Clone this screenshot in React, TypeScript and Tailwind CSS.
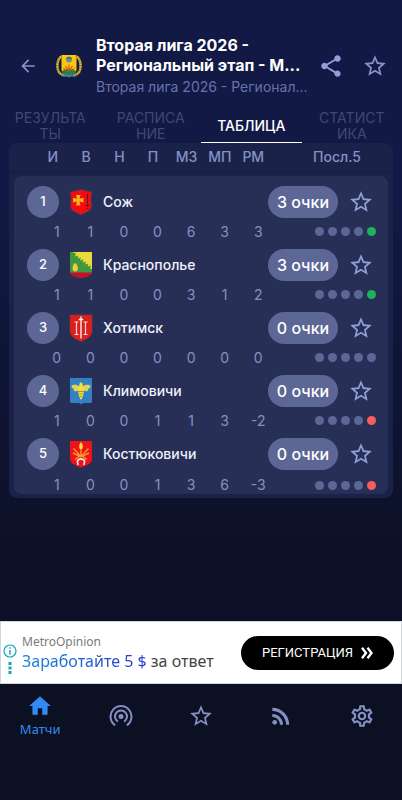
import React, { useState } from "react";
import {
    MdArrowBack,
    MdHome,
    MdOutlineSettings,
    MdRssFeed,
    MdShare,
    MdStarBorder,
} from "react-icons/md";

type Result = "none" | "win" | "loss";

interface Team {
    rank: number;
    name: string;
    points: string;
    stats: number[];
    last: Result;
    crest: React.ReactNode;
}

const SozhCrest = () => (
    <svg viewBox="0 0 24 28" className="w-6 h-7" aria-hidden="true">
        <path d="M1.500 4C6 4 8.500 2 12 2s6 2 10.500 2c-1.200 4.500-.8 9-.2 13.500.2 5-4.800 6.500-10.300 9-5.500-2.500-10.500-4-10.300-9 .6-4.500 1-9-.2-13.500z" fill="#f40b0d" stroke="#8c3445" strokeWidth=".7" />
        <path d="M7 7h4.500l-1 3.700 4-.9v4.700l-4-1 1 4H7l1-4-4 1V9.800l4 .9z" fill="#f9b21c" />
        <path d="M18.500 6v13M16.500 17.500h4M17.500 20.500h2" stroke="#5b1826" strokeWidth="1.100" />
    </svg>
);

const KrasnopolyeCrest = () => (
    <svg viewBox="0 0 24 28" className="w-6 h-7" aria-hidden="true">
        <path d="M1 1h22v19c0 4-5 6-11 7-6-1-11-3-11-7z" fill="#3f9840" />
        <path d="M3 1h20v17l-2-.5 1-3-3.500 1 1-3-3.500 1 1-3-3.500 1 1-3-3.500 1 1-3-3.500 1 1-3-3.500 1 1-3z" fill="#eada3c" />
        <path d="M1 21.500h22c-.8 3.500-5.500 4.500-11 5.500-5.500-1-10.200-2-11-5.500z" fill="#c80e2c" />
        <path d="M3.500 17c0-2 1-2.500 1-4.500h3c0 2 1.500 2.500 1.500 4.500s-1 3.500-2.700 3.500S3.500 19 3.500 17z" fill="#f6c544" />
    </svg>
);

const KhotimskCrest = () => (
    <svg viewBox="0 0 24 28" className="w-6 h-7" aria-hidden="true">
        <path d="M1 1h22v16c0 5.500-5.500 8-11 10.500C6.500 25 1 22.500 1 17z" fill="#d9201f" stroke="#a52835" strokeWidth=".5" />
        <path d="M12 2.500v22M9.800 5.500h4.400" stroke="#fff" strokeWidth="1.300" />
        <path d="M7.500 8v12.500M16.500 8v12.500M5.500 8h4M5.500 20.500h4M14.500 8h4M14.500 20.500h4" stroke="#f7d9d2" strokeWidth="1.200" />
    </svg>
);

const KlimovichiCrest = () => (
    <svg viewBox="0 0 24 28" className="w-6 h-7" aria-hidden="true">
        <path d="M1 1h22v23.500c0 1-.8 1.500-2 1.500h-7L12 27.500 10 26H3c-1.200 0-2-.5-2-1.500z" fill="#3181c4" />
        <path d="M11 9.500C8 7.500 4 7 2.500 9c0 2 1 2.500 2.500 2.500C4 13 5 14.500 6.500 14.300c2 .2 3.500-1 4.500-3zM13 9.500c3-2 7-2.500 8.500-.5 0 2-1 2.500-2.500 2.500 1 1.500 0 3-1.500 2.800-2 .2-3.500-1-4.500-3z" fill="#e3d44f" />
        <path d="M12 5.500c1.500 0 2 1.500 1.500 3 1.500 2 1.500 3.500 1 5 .7 3-.5 6.500-2.500 9.500-2-3-3.200-6.500-2.500-9.500-.5-1.500-.5-3 1-5-.5-1.500 0-3 1.500-3z" fill="#f3df3d" />
        <path d="M10 14.500h4M10 17h4M10.800 19.500h2.400" stroke="#8b8b37" strokeWidth=".8" />
    </svg>
);

const KostyukovichiCrest = () => (
    <svg viewBox="0 0 24 28" className="w-6 h-7" aria-hidden="true">
        <path d="M1 1h22v18c0 4.500-5.500 6.500-11 8.500C6.500 25.500 1 23.500 1 19z" fill="#f01216" />
        <path d="M12 2c2 2.500 2.400 4.500 1.200 7h-2.400C9.600 6.500 10 4.500 12 2z" fill="#fbd63c" />
        <path d="M4.500 8.500l7.500 8 7.500-8M4 13l8 4 8-4M6 19.500l6-4.500 6 4.500M12 9v8" fill="none" stroke="#f39a2d" strokeWidth="1.400" />
        <path d="M9.300 25c-2-4-.5-6 2.700-6s4.700 2 2.700 6" fill="none" stroke="#f6dce4" strokeWidth="1.800" />
    </svg>
);

const LeagueCrest = () => (
    <svg viewBox="0 0 26 24" className="w-[26px] h-6 shrink-0" aria-hidden="true">
        <path d="M5 2.500C1.500 6 .8 11 2 16c1 3.500 3.500 5 7 5.500M21 2.500c3.500 3.500 4.200 8.500 3 13.500-1 3.500-3.500 5-7 5.500" fill="none" stroke="#8e7a2e" strokeWidth="2.600" />
        <path d="M5 2.500C1.500 6 .8 11 2 16c1 3.500 3.500 5 7 5.500M21 2.500c3.500 3.500 4.200 8.500 3 13.500-1 3.500-3.500 5-7 5.500" fill="none" stroke="#e2b92f" strokeWidth="2" strokeDasharray="1.600 1" />
        <path d="M5.500 1h15v15c0 3-4 4-7.500 6-3.500-2-7.500-3-7.500-6z" fill="#fbc70e" />
        <circle cx="13" cy="5.500" r="3" fill="#5d9396" />
        <path d="M10.500 4.500c2-1 3-1 5 0" fill="none" stroke="#2f4a55" />
        <path d="M6 17c3-2.500 11-2.500 14 0v1.500c-2 1.500-4 2-7 3-3-1-5-1.500-7-3z" fill="#26804a" />
        <path d="M13 10.500V17M9.500 12l3.500 5 3.500-5M7.500 14.500l5.500 2.500 5.500-2.500" fill="none" stroke="#c2571b" strokeWidth="1.100" />
        <path d="M5.500 21.500c3 1 5-.5 7.500 1 2.500-1.500 4.500 0 7.500-1" fill="none" stroke="#4385b4" strokeWidth="1.500" />
    </svg>
);

const BroadcastIcon = () => (
    <svg viewBox="0 0 24 24" className="size-6" fill="none" stroke="currentColor" strokeWidth="2" aria-hidden="true">
        <path d="M6.100 21.300a10.500 10.500 0 1 1 11.800 0" />
        <path d="M8.900 17.600a6 6 0 1 1 6.200 0" />
        <circle cx="12" cy="12.500" r="2.500" fill="currentColor" stroke="none" />
    </svg>
);

const teams: Team[] = [
    { rank: 1, name: "Сож", points: "3 очки", stats: [1, 1, 0, 0, 6, 3, 3], last: "win", crest: <SozhCrest /> },
    { rank: 2, name: "Краснополье", points: "3 очки", stats: [1, 1, 0, 0, 3, 1, 2], last: "win", crest: <KrasnopolyeCrest /> },
    { rank: 3, name: "Хотимск", points: "0 очки", stats: [0, 0, 0, 0, 0, 0, 0], last: "none", crest: <KhotimskCrest /> },
    { rank: 4, name: "Климовичи", points: "0 очки", stats: [1, 0, 0, 1, 1, 3, -2], last: "loss", crest: <KlimovichiCrest /> },
    { rank: 5, name: "Костюковичи", points: "0 очки", stats: [1, 0, 0, 1, 3, 6, -3], last: "loss", crest: <KostyukovichiCrest /> },
];

const columns = ["И", "В", "Н", "П", "МЗ", "МП", "РМ"];

// Long labels are broken over two lines
const tabs = [["РЕЗУЛЬТА", "ТЫ"], ["РАСПИСА", "НИЕ"], ["ТАБЛИЦА"], ["СТАТИСТ", "ИКА"]];

const dotColors: Record<Result, string> = {
    none: "bg-[#5d6796]",
    win: "bg-[#1fb25c]",
    loss: "bg-[#f45d62]",
};

const navItems = [
    { label: "Эфир", icon: <BroadcastIcon /> },
    { label: "Избранное", icon: <MdStarBorder className="size-[26px]" /> },
    { label: "Новости", icon: <MdRssFeed className="size-[26px]" /> },
    { label: "Настройки", icon: <MdOutlineSettings className="size-[26px]" /> },
];

const TeamRows = ({ team }: { team: Team }) => (
    <>
        <tr className="flex items-center h-[34px] pl-[13px] pr-3.5">
            <td className="flex items-center justify-center size-8 rounded-full bg-[#5d6795] text-[13px] font-medium text-white">
                {team.rank}
            </td>
            <td className="flex ml-2.5">{team.crest}</td>
            <th scope="row" className="flex-1 ml-2.5 text-left text-sm font-medium text-[#f0f2fb]">
                {team.name}
            </th>
            <td className="flex items-center justify-center w-[70px] h-8 rounded-full bg-[#5d6795] text-base font-medium text-white whitespace-nowrap">
                {team.points}
            </td>
            <td className="flex ml-2.5">
                <button type="button" aria-label={`В избранное: ${team.name}`} className="text-[#929fd4]">
                    <MdStarBorder className="size-[26px]" />
                </button>
            </td>
        </tr>
        <tr className="grid grid-cols-[repeat(7,1fr)_101px] items-center h-[21px] mt-0.5 mb-1.5 pl-[26px] pr-3 last:mt-1 last:mb-0 last:h-[19px]">
            {team.stats.map((value, index) => (
                <td key={index} className="text-center text-sm text-[#8591c2]">{value}</td>
            ))}
            <td className="flex justify-end gap-1">
                {(["none", "none", "none", "none", team.last] as Result[]).map((result, index) => (
                    <span key={index} className={`size-[9px] rounded-full ${dotColors[result]}`} />
                ))}
            </td>
        </tr>
    </>
);

const App = () => {
    const [activeTab, setActiveTab] = useState(2);

    return (
        <div className="flex flex-col min-h-screen bg-[#0c1023] font-['Inter',sans-serif]">
            <div className="flex-1 flex flex-col bg-linear-to-b from-[#121945] from-0% via-[#121945] via-30% to-[#0c1027] to-90%">
                {/* Header */}
                <header className="flex items-center pl-[18px] pr-3.5 pt-7 h-[104px]">
                    <button type="button" aria-label="Назад" className="text-[#8793c6]">
                        <MdArrowBack className="size-5" />
                    </button>
                    <div className="ml-[18px]"><LeagueCrest /></div>
                    <div className="flex-1 min-w-0 ml-3.5">
                        <h1 className="text-base leading-5 font-bold text-white">
                            Вторая лига 2026 -
                            <span className="block whitespace-nowrap">Региональный этап - М...</span>
                        </h1>
                        <p className="mt-0.5 text-sm leading-5 text-[#6773a8] whitespace-nowrap">Вторая лига 2026 - Регионал...</p>
                    </div>
                    <button type="button" aria-label="Поделиться" className="text-[#929fd8]">
                        <MdShare className="size-[26px]" />
                    </button>
                    <button type="button" aria-label="В избранное" className="ml-[18px] text-[#8793c6]">
                        <MdStarBorder className="size-[26px]" />
                    </button>
                </header>

                {/* Tabs */}
                <div role="tablist" className="grid grid-cols-4 h-[39px]">
                    {tabs.map((lines, index) => (
                        <button
                            key={lines[0]}
                            type="button"
                            role="tab"
                            aria-selected={activeTab === index}
                            onClick={() => setActiveTab(index)}
                            className={`flex flex-col items-center justify-center pt-1.5 text-sm leading-4 border-b-2 ${activeTab === index ? "border-white text-white font-medium" : "border-transparent text-[#414870]"}`}
                        >
                            {lines.map((line) => <span key={line}>{line}</span>)}
                        </button>
                    ))}
                </div>

                {/* Standings */}
                <main className="px-[9px]">
                    <table className="block rounded-lg bg-[#1b2249] pb-1">
                        <thead className="block border-b border-[#161c43]">
                            <tr className="grid grid-cols-[repeat(7,1fr)_101px] items-center h-7 pl-[27px] pr-[22px] text-sm text-[#8591c6]">
                                {columns.map((column) => (
                                    <th key={column} scope="col" className="text-center font-medium">{column}</th>
                                ))}
                                <th scope="col" className="pr-2.5 text-right font-medium">Посл.5</th>
                            </tr>
                        </thead>
                        <tbody className="block mx-[5px] mt-1 pt-[9px] rounded-lg bg-[#282f57]">
                            {teams.map((team) => <TeamRows key={team.rank} team={team} />)}
                        </tbody>
                    </table>
                </main>
            </div>

            {/* Ad */}
            <aside className="flex items-center h-[63px] bg-white border border-gray-300 font-['Noto_Sans',sans-serif]">
                <div className="flex flex-col items-center gap-1 w-[18px] pt-3">
                    <svg viewBox="0 0 14 14" className="size-3.5" fill="none" stroke="#14a5bd" aria-hidden="true">
                        <circle cx="7" cy="7" r="6" strokeWidth="1.200" />
                        <path d="M7 6v4.500M7 3.300v1.400" strokeWidth="1.500" />
                    </svg>
                    <svg viewBox="0 0 4 12" className="w-1 h-3" fill="#14a5bd" aria-hidden="true">
                        <path d="M.5 0h3v3h-3zM.5 4.500h3v3h-3zM.5 9h3v3h-3z" />
                    </svg>
                </div>
                <div className="flex-1 ml-[3px] whitespace-nowrap">
                    <p className="text-xs leading-4 text-[#7b7b7b]">MetroOpinion</p>
                    <p className="text-base leading-[22px] text-[#444]">
                        <span className="inline-block bg-linear-to-r from-[#1981dd] to-[#2435ce] bg-clip-text text-transparent">Заработайте 5 $</span> за ответ
                    </p>
                </div>
                <a href="#register" className="flex items-center justify-center gap-2 w-[153px] h-[34px] mr-[7px] rounded-full bg-black font-['Roboto',sans-serif] text-[13px] text-white">
                    РЕГИСТРАЦИЯ
                    <svg viewBox="0 0 12 12" className="size-3" fill="none" stroke="currentColor" strokeWidth="2.400" aria-hidden="true">
                        <path d="M1 .8 5 6 1 11.200M6.500.8l4 5.200-4 5.200" />
                    </svg>
                </a>
            </aside>

            {/* Bottom navigation */}
            <nav className="grid grid-cols-5 items-start h-[116px] pt-[9px]">
                <button type="button" className="flex flex-col items-center text-[#3389f2]">
                    <MdHome className="size-[26px]" />
                    <span className="mt-0.5 text-[13px] leading-4 font-['Noto_Sans',sans-serif]">Матчи</span>
                </button>
                {navItems.map((item) => (
                    <button key={item.label} type="button" aria-label={item.label} className="flex items-center justify-center h-[46px] text-[#858fc2]">
                        {item.icon}
                    </button>
                ))}
            </nav>
        </div>
    );
};

export default App;
